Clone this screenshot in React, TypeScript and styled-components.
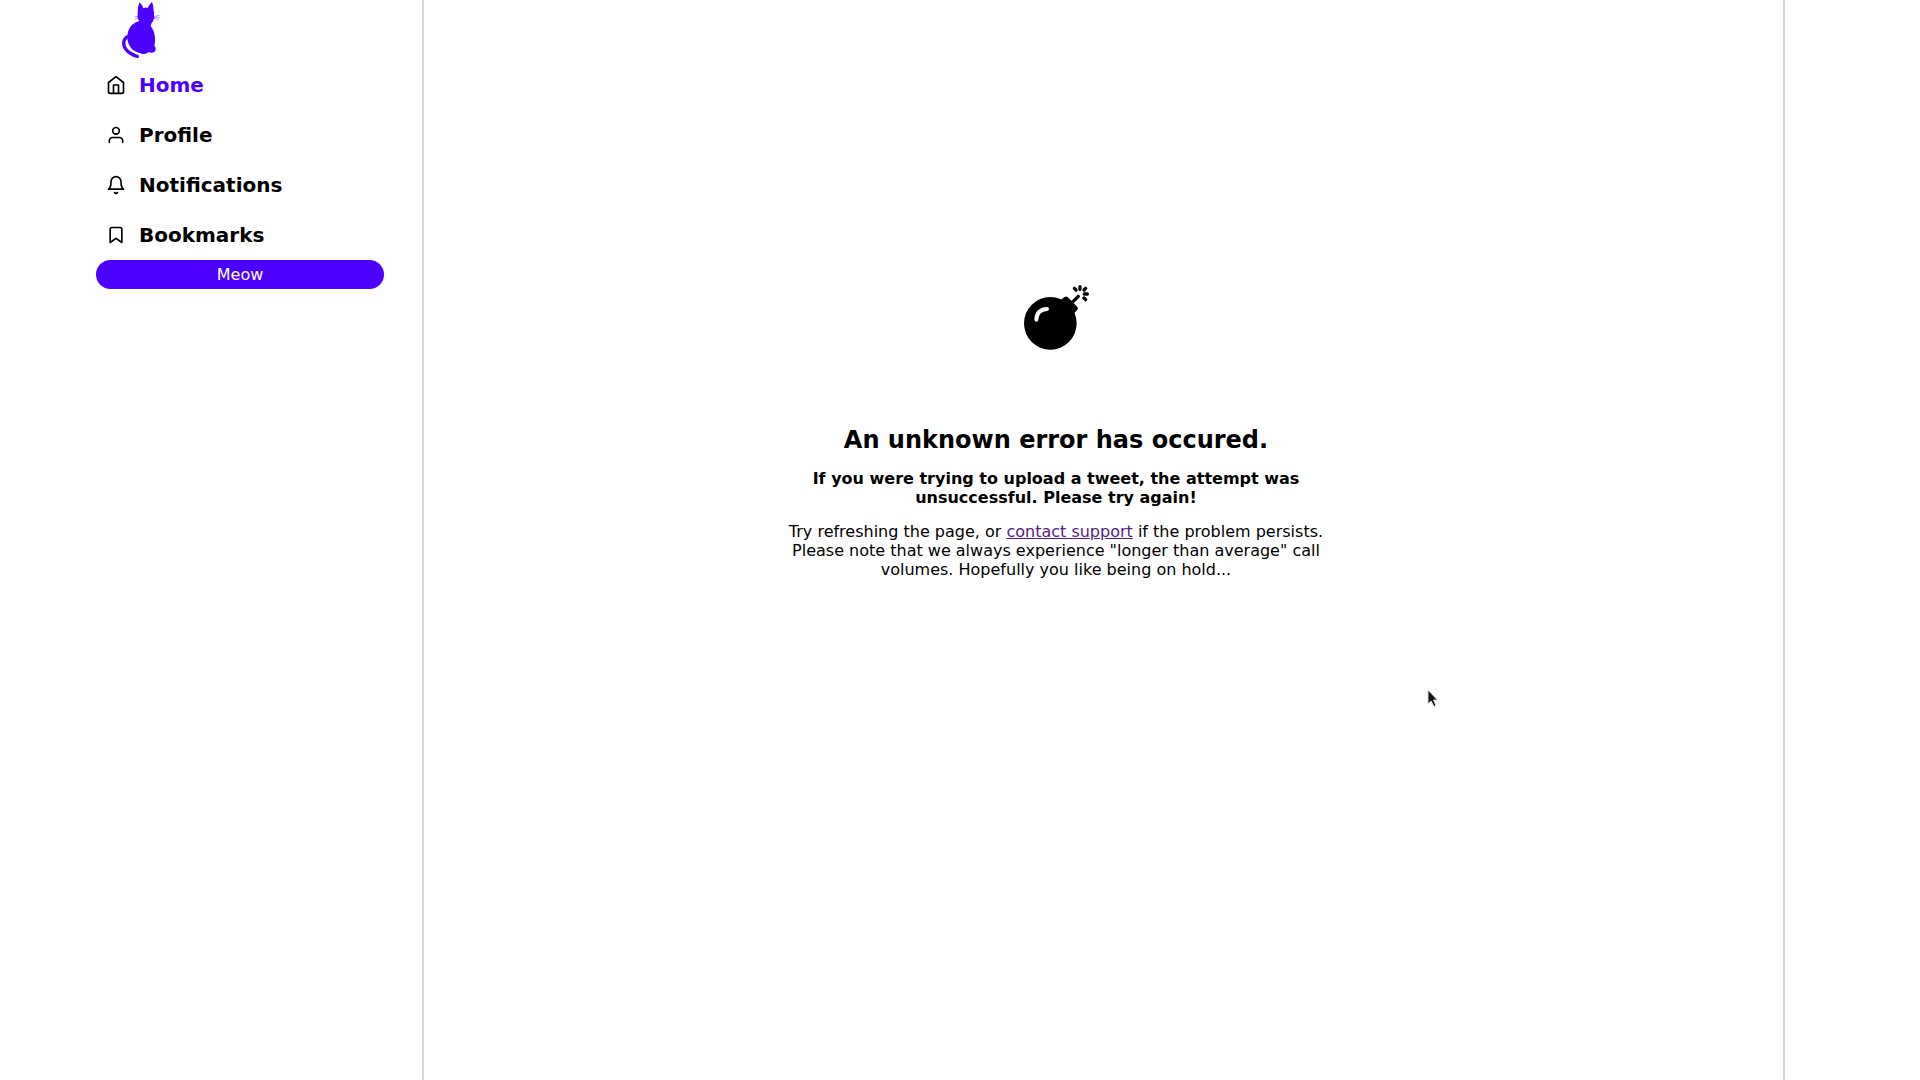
import React from "react";
import styled, { createGlobalStyle } from "styled-components";
import { FiBell, FiBookmark, FiHome, FiUser } from "react-icons/fi";

const GlobalStyle = createGlobalStyle`
  * { box-sizing: border-box; }
  body {
    margin: 0;
    background: #fff;
    color: #000;
    font-family: "DejaVu Sans", sans-serif;
    font-size: 16px;
    line-height: 19px;
  }
`;

const Page = styled.div`
  display: flex;
  min-height: 100vh;
`;

const Sidebar = styled.aside`
  display: flex;
  flex-direction: column;
  width: 22%;
  padding: 0 2% 0 5%;
`;

const LogoLink = styled.a`
  display: block;
  height: 60px;
  padding-left: 14px;
`;

const Nav = styled.nav`
  display: flex;
  flex-direction: column;
`;

const NavItem = styled.a<{ $active?: boolean }>`
  display: flex;
  align-items: center;
  gap: 13px;
  height: 50px;
  padding: 0 10px;
  color: ${(p) => (p.$active ? "#4c00ff" : "#000")};
  font-size: 20px;
  font-weight: bold;
  line-height: 24px;
  text-decoration: none;

  svg {
    width: 20px;
    height: 20px;
    color: #000;
  }
`;

const MeowButton = styled.button`
  width: 100%;
  max-width: 288px;
  padding: 5px 16px;
  border: 0;
  border-radius: 20px;
  background: #4c00ff;
  color: #fff;
  font: inherit;
  cursor: pointer;
`;

const Main = styled.main`
  width: calc(71% - 1px);
  padding: 285px calc(5% - 1px) 0 0;
  border-left: 2px solid lightgray;
  border-right: 2px solid lightgray;
`;

const ErrorPanel = styled.section`
  display: flex;
  flex-direction: column;
  align-items: center;
  gap: 15px;
  max-width: 550px;
  margin: 0 auto;
  text-align: center;
`;

const BombIcon = styled.svg`
  width: 66px;
  height: 66px;
  margin-bottom: 60px;
`;

const Title = styled.h2`
  margin: 0;
  font-size: 24px;
  line-height: 28px;
`;

const Lead = styled.h4`
  margin: 0;
  font-size: 16px;
`;

const Help = styled.p`
  margin: 0;
`;

const SupportLink = styled.a`
  color: #551a8b;
`;

const Pointer = styled.svg`
  position: fixed;
  left: 1427px;
  top: 688px;
  width: 12px;
  height: 20px;
  pointer-events: none;
`;

const navItems = [
  { label: "Home", Icon: FiHome, active: true },
  { label: "Profile", Icon: FiUser },
  { label: "Notifications", Icon: FiBell },
  { label: "Bookmarks", Icon: FiBookmark },
];

function CatLogo() {
  return (
    <svg width="60" height="60" viewBox="0 0 180 180" fill="#4c00ff" aria-hidden="true">
      <path d="M88 7 Q97 14 100 25 Q107 21 113 24 Q118 13 126 5 Q131 18 131 33 Q134 40 132 46 Q135 55 129 64 Q122 71 122 77 Q133 92 135 110 Q136 125 133 137 Q138 142 137 149 Q135 158 124 158 Q119 158 116 156 Q110 163 98 162 Q80 158 68 149 Q52 134 52 110 Q52 89 66 75 Q75 66 88 63 Q81 56 83 43 Q82 24 88 7Z" />
      <path
        d="M56 109 Q41 114 41 130 Q42 147 60 159 Q72 167 82 169"
        fill="none"
        stroke="#4c00ff"
        strokeWidth="10"
        strokeLinecap="round"
      />
      <path
        d="M130 50L148 46M130 52L150 52M130 54L146 59M85 50L74 49M85 54L75 57"
        fill="none"
        stroke="#4c00ff"
        strokeWidth="1.2"
      />
    </svg>
  );
}

function Bomb() {
  return (
    <BombIcon viewBox="39 30 198 198" aria-hidden="true">
      <circle cx="121" cy="145" r="79" />
      <path
        d="M168 74L194 100L178 116L150 88Z"
        stroke="#000"
        strokeWidth="18"
        strokeLinejoin="round"
      />
      <path
        d="M186 83L205 64M193 40L198 45M210 35V43M227 40L222 45M223 57H232M222 69L227 74"
        fill="none"
        stroke="#000"
        strokeWidth="10"
        strokeLinecap="round"
      />
      <path
        d="M79 134Q80 104 111 102"
        fill="none"
        stroke="#fff"
        strokeWidth="12"
        strokeLinecap="round"
      />
    </BombIcon>
  );
}

export default function App() {
  return (
    <>
      <GlobalStyle />
      <Page>
        <Sidebar>
          <LogoLink href="#" aria-label="Home page">
            <CatLogo />
          </LogoLink>
          <Nav>
            {navItems.map(({ label, Icon, active }) => (
              <NavItem key={label} href="#" $active={active}>
                <Icon />
                {label}
              </NavItem>
            ))}
          </Nav>
          <MeowButton type="button">Meow</MeowButton>
        </Sidebar>
        <Main>
          <ErrorPanel>
            <Bomb />
            <Title>An unknown error has occured.</Title>
            <Lead>
              If you were trying to upload a tweet, the attempt was unsuccessful. Please try again!
            </Lead>
            <Help>
              Try refreshing the page, or <SupportLink href="#">contact support</SupportLink> if the
              problem persists. Please note that we always experience "longer than average" call
              volumes. Hopefully you like being on hold...
            </Help>
          </ErrorPanel>
        </Main>
      </Page>
      <Pointer viewBox="0 0 12 20" aria-hidden="true">
        <path
          d="M1 2V16L4 13L7 18.500L9 17.500L6.500 12H10.500Z"
          fill="#111"
          stroke="#ddd"
          strokeWidth="1"
          strokeLinejoin="round"
        />
      </Pointer>
    </>
  );
}
